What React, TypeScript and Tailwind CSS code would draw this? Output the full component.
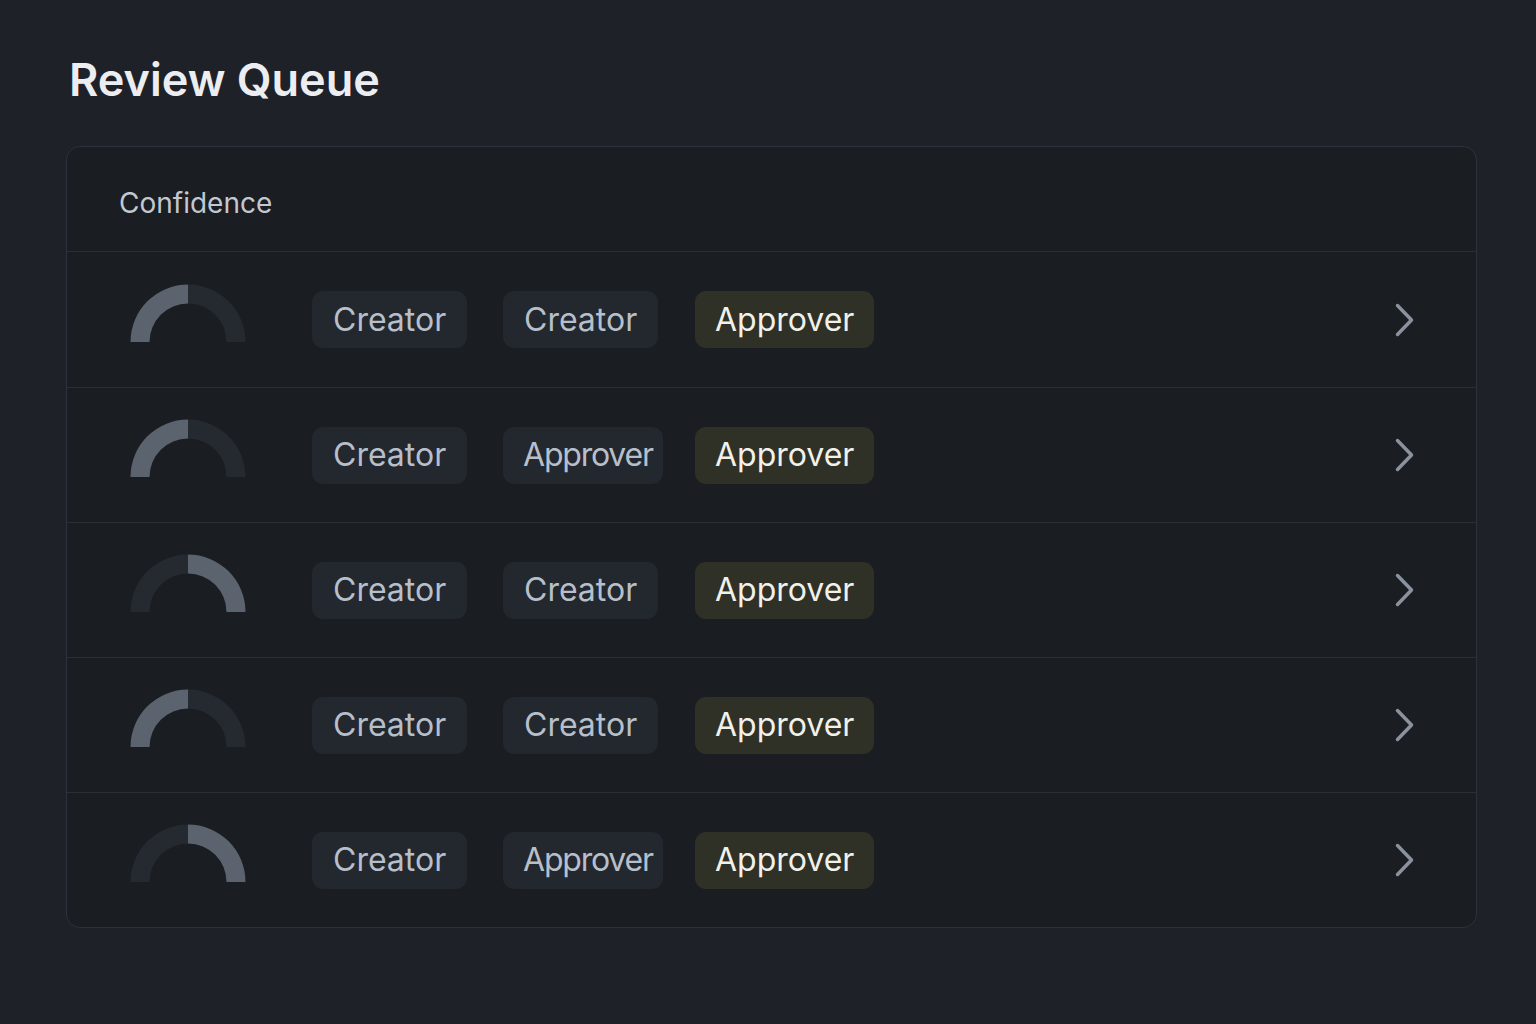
import React from "react";

type Role = "Creator" | "Approver";

type Row = {
  side: "left" | "right";
  roles: [Role, Role];
};

const rows: Row[] = [
  { side: "left", roles: ["Creator", "Creator"] },
  { side: "left", roles: ["Creator", "Approver"] },
  { side: "right", roles: ["Creator", "Creator"] },
  { side: "left", roles: ["Creator", "Creator"] },
  { side: "right", roles: ["Creator", "Approver"] },
];

// half-ring gauge, one quarter lit
function Gauge({ side }: { side: "left" | "right" }) {
  const leftQ = "M0.5 58 A57.5 57.5 0 0 1 58 0.5 L58 19.5 A38.5 38.5 0 0 0 19.5 58 Z";
  const rightQ = "M58 0.5 A57.5 57.5 0 0 1 115.5 58 L96.5 58 A38.5 38.5 0 0 0 58 19.5 Z";
  return (
    <svg width="116" height="58" viewBox="0 0 116 58" className="block">
      <path d={side === "left" ? rightQ : leftQ} fill="#252a31" />
      <path d={side === "left" ? leftQ : rightQ} fill="#5a636e" />
    </svg>
  );
}

function Pill({ label, tone }: { label: string; tone: "gray" | "olive" }) {
  if (tone === "olive") {
    return (
      <span className="inline-flex h-[57px] items-center rounded-[11px] bg-[#2f3026] px-[20px] text-[32px] text-[#f1f1ec]">
        {label}
      </span>
    );
  }
  return (
    <span
      className={
        "inline-flex h-[57px] items-center rounded-[11px] bg-[#23272e] text-[32px] text-[#b7bfca] " +
        (label === "Approver" ? "pl-[20px] pr-[10px] tracking-[-1.2px]" : "px-[21px]")
      }
    >
      {label}
    </span>
  );
}

export default function App() {
  return (
    <div
      className="min-h-screen bg-[#1e2128] pl-[66px] pr-[59px] pt-[52px]"
      style={{ fontFamily: "Inter, 'Noto Sans', sans-serif" }}
    >
      <h1 className="ml-[3px] text-[45px] font-semibold leading-[56px] text-[#ecedf0]">
        Review Queue
      </h1>

      <div className="mt-[38px] overflow-hidden rounded-[14px] border border-[#2d3139] bg-[#1a1d22]">
        <div className="flex h-[105px] items-center border-b border-[#2a2e35] pl-[52px] pt-[8px] text-[28px] text-[#c3c8d0]">
          Confidence
        </div>
        {rows.map((row, i) => (
          <div
            key={i}
            className={
              "flex h-[135px] items-center pl-[63px] pr-[60px] " +
              (i > 0 ? "border-t border-[#2a2e35]" : "")
            }
          >
            <div className="mb-[14px] w-[182px] shrink-0">
              <Gauge side={row.side} />
            </div>
            <div className="w-[191px] shrink-0">
              <Pill label={row.roles[0]} tone="gray" />
            </div>
            <div className="w-[192px] shrink-0">
              <Pill label={row.roles[1]} tone="gray" />
            </div>
            <Pill label="Approver" tone="olive" />
            <div className="flex-1" />
            <svg width="22" height="36" viewBox="0 0 22 36" className="block">
              <path
                d="M3.5 3.5 L17.5 18 L3.5 32.5"
                fill="none"
                stroke="#8a929d"
                strokeWidth="3.5"
                strokeLinecap="round"
                strokeLinejoin="round"
              />
            </svg>
          </div>
        ))}
      </div>
    </div>
  );
}
